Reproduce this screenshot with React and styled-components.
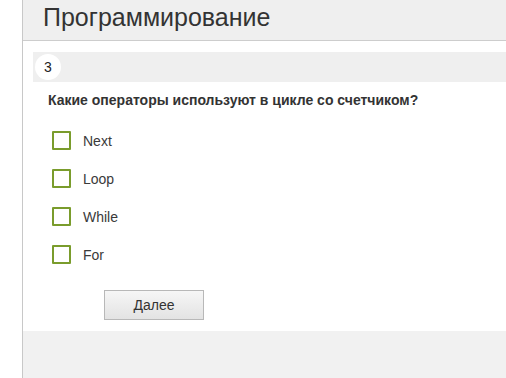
import styled, { createGlobalStyle } from 'styled-components';

const GlobalStyle = createGlobalStyle`
  body {
    margin: 0;
    font-family: "Liberation Sans", Arial, sans-serif;
    background: #fff;
  }
`;

const Page = styled.div`
  display: flex;
  min-height: 378px;
`;

const Gutter = styled.div`
  width: 22px;
  flex-shrink: 0;
  background: #fff;
`;

const Main = styled.div`
  flex: 1;
  border-left: 1px solid #c8c8c8;
  background: #f1f1f1;
  display: flex;
  flex-direction: column;
`;

const Header = styled.header`
  height: 41px;
  box-sizing: border-box;
  background: #efefef;
  border-bottom: 1px solid #cdcdcd;
  padding-left: 20px;
  padding-bottom: 6px;
  display: flex;
  align-items: center;
  font-size: 25px;
  color: #333;
`;

const Content = styled.section`
  background: #fff;
  padding: 11px 0 11px 10px;
`;

const NumberBar = styled.div`
  height: 30px;
  background: #efefef;
  display: flex;
  align-items: center;
  padding-left: 2px;
`;

const NumberBadge = styled.span`
  width: 26px;
  height: 26px;
  border-radius: 50%;
  background: #fff;
  display: flex;
  align-items: center;
  justify-content: center;
  font-size: 14px;
  color: #222;
`;

const Question = styled.p`
  margin: 10px 0 0 15px;
  font-size: 14px;
  font-weight: bold;
  color: #333;
`;

const Options = styled.ul`
  list-style: none;
  margin: 23px 0 0 19px;
  padding: 0;
  display: flex;
  flex-direction: column;
  gap: 19px;
`;

const Option = styled.li`
  display: flex;
  align-items: center;
  gap: 12px;
  font-size: 14px;
  color: #3a3a3a;
`;

const Box = styled.span`
  width: 19px;
  height: 19px;
  box-sizing: border-box;
  border: 2px solid #7a9c2c;
  border-radius: 1px;
`;

const NextButton = styled.button`
  margin: 26px 0 0 71px;
  width: 100px;
  height: 30px;
  border: 1px solid #b8b8b8;
  border-radius: 0;
  background: linear-gradient(#f6f6f6, #e3e3e3);
  font-family: "Liberation Sans", Arial, sans-serif;
  font-size: 14px;
  color: #333;
  display: block;
`;

const answers = ['Next', 'Loop', 'While', 'For'];

function App() {
  return (
    <>
      <GlobalStyle />
      <Page>
        <Gutter />
        <Main>
          <Header>Программирование</Header>
          <Content>
            <NumberBar>
              <NumberBadge>3</NumberBadge>
            </NumberBar>
            <Question>Какие операторы используют в цикле со счетчиком?</Question>
            <Options>
              {answers.map((a) => (
                <Option key={a}>
                  <Box />
                  {a}
                </Option>
              ))}
            </Options>
            <NextButton>Далее</NextButton>
          </Content>
        </Main>
      </Page>
    </>
  );
}

export default App;
